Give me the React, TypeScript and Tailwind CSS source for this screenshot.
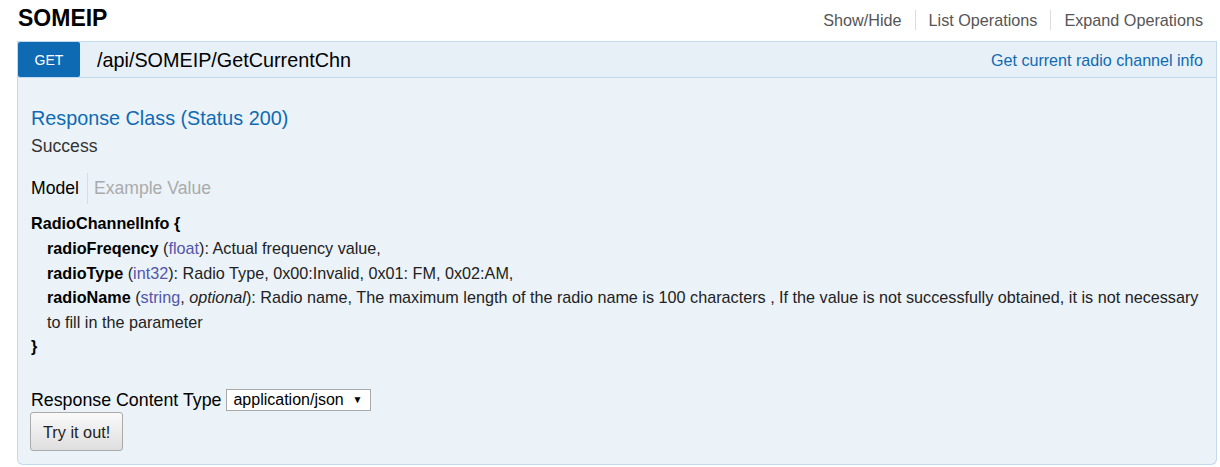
import React from "react";

const font = { fontFamily: '"Liberation Sans", Arial, Helvetica, sans-serif' };

export default function App() {
  return (
    <div className="w-[1220px] h-[467px] bg-white pl-[17px] pr-[3px] text-[#222]" style={font}>
      {/* Resource heading */}
      <div className="flex justify-between items-start h-[41px]">
        <h2 className="pl-[1px] mt-[5px] text-[23px] leading-[26px] font-bold text-black">SOMEIP</h2>
        <ul className="flex mt-[10px] text-[16.2px] leading-[20px] text-[#555]">
          <li className="pr-[13px]">Show/Hide</li>
          <li className="px-[13px] border-l border-[#ddd]">List Operations</li>
          <li className="pl-[13px] pr-[14px] border-l border-[#ddd]">Expand Operations</li>
        </ul>
      </div>

      {/* Operation */}
      <div>
        <div className="flex items-center h-[37px] border border-[#c3d9ec] bg-[#e7f0f7] pr-[13px]">
          <span className="flex items-center justify-center w-[62px] h-[35px] rounded-[2px] bg-[#0f6ab4] text-white text-[14px] pt-[1px]">
            GET
          </span>
          <span className="ml-[17px] text-[19.8px] leading-[24px] text-black">/api/SOMEIP/GetCurrentChn</span>
          <span className="ml-auto text-[16.1px] leading-[20px] text-[#0f6ab4]">Get current radio channel info</span>
        </div>

        <div className="border border-t-0 border-[#c3d9ec] bg-[#ebf3f9] rounded-b-[6px] px-[13px] pt-[28px] pb-[13px]">
          <h4 className="text-[19.8px] leading-[24px] text-[#0f6ab4]">Response Class (Status 200)</h4>
          <div className="mt-[4px] text-[17.6px] leading-[24px] text-[#333]">Success</div>

          <div className="flex mt-[15px] text-[17.6px] leading-[31px]">
            <span className="pr-[8px] text-black">Model</span>
            <span className="border-l border-[#d6dde3] pl-[6px] text-[#aaa]">Example Value</span>
          </div>

          <div className="mt-[7px] text-[16.2px] leading-[24.4px] text-[#222]">
            <div className="font-bold text-black">RadioChannelInfo {"{"}</div>
            <div className="pl-[16px] mt-[1px]">
              <div>
                <span className="font-bold text-black">radioFreqency</span> (<span className="text-[#55a]">float</span>): Actual frequency value,
              </div>
              <div>
                <span className="font-bold text-black">radioType</span> (<span className="text-[#55a]">int32</span>): Radio Type, 0x00:Invalid, 0x01: FM, 0x02:AM,
              </div>
              <div>
                <span className="font-bold text-black">radioName</span> (<span className="text-[#55a]">string</span>, <span className="italic">optional</span>): Radio name, The maximum length of the radio name is 100 characters , If the value is not successfully obtained, it is not necessary to fill in the parameter
              </div>
            </div>
            <div className="font-bold text-black">{"}"}</div>
          </div>

          <div className="flex items-center mt-[31px] h-[22px] text-[17.8px] text-black">
            <span>Response Content Type</span>
            <span className="ml-[5px] flex items-center h-[22px] w-[145px] border border-[#a9a9a9] bg-white pl-[6px] pr-[8px] text-[16px]">
              <span>application/json</span>
              <span className="ml-auto text-[10px] leading-none">▼</span>
            </span>
          </div>

          <button
            className="mt-[1px] -ml-px h-[39px] px-[12px] border border-[#aaa] rounded-[3px] bg-gradient-to-b from-[#fafafa] to-[#dedede] text-[16.3px] text-[#222]"
            style={font}
          >
            Try it out!
          </button>
        </div>
      </div>
    </div>
  );
}
